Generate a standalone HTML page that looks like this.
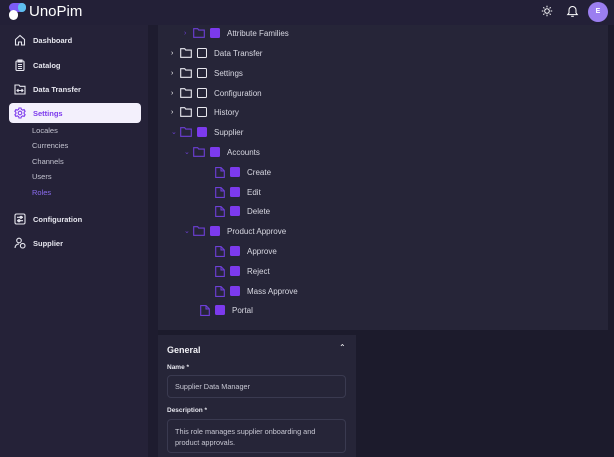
<!DOCTYPE html>
<html><head><meta charset="utf-8"><style>
*{box-sizing:border-box;margin:0;padding:0}
body{width:614px;height:457px;overflow:hidden;background:#1c1b2c;font-family:"Liberation Sans",sans-serif;position:relative}
.hdr{position:absolute;left:0;top:0;width:614px;height:25px;background:#232037}
.side{position:absolute;left:0;top:25px;width:148px;height:432px;background:#252238}
.strip{position:absolute;left:148px;top:25px;width:10px;height:432px;background:#1e1c2f}
.panel{position:absolute;left:158px;top:25px;width:450px;height:305px;background:#262538}
.nav{position:absolute;left:14px;font-size:7.5px;font-weight:bold;color:#e6e6ee;display:flex;align-items:center}
.nav svg{width:12px;height:12px;margin-right:7px}
.sub{position:absolute;left:32px;font-size:7.5px;color:#c4c4d0}
.row{position:absolute;height:12px;display:flex;align-items:center;font-size:8px;color:#d8d8e2}
.row svg{flex:none}
.cb{width:10px;height:10px;border-radius:1.5px;flex:none}
.on{background:#7c3aed}
.off{border:1.2px solid #e8e8ee}
.gen{position:absolute;left:158px;top:335px;width:198px;height:122px;background:#262538}
.lbl{position:absolute;left:9px;font-size:6.5px;font-weight:bold;color:#e6e6ee}
.inp{position:absolute;left:9px;width:179px;border:1px solid #3a3a50;border-radius:4px;font-size:7.3px;color:#c8c8d4;padding:0 7px}
</style></head><body>
<div class="hdr"></div>
<svg style="position:absolute;left:9px;top:3px" width="18" height="17" viewBox="0 0 18 17"><rect x="0" y="0" width="17" height="9" rx="4.5" fill="#7c5cf5"/><rect x="9" y="0" width="8" height="9" rx="4" fill="#5ec0f0"/><rect x="0" y="7" width="9" height="10" rx="4.5" fill="#fff"/></svg>
<div style="position:absolute;left:29px;top:3px;font-size:15px;color:#fff">UnoPim</div>
<svg style="position:absolute;left:541px;top:5px" width="12" height="12" viewBox="0 0 12 12" stroke="#fff" stroke-width="1" fill="none"><circle cx="6" cy="6" r="2.3"/><path d="M6 .8v1.6M6 9.6v1.6M.8 6h1.6M9.6 6h1.6M2.3 2.3l1.1 1.1M8.6 8.6l1.1 1.1M2.3 9.7l1.1-1.1M8.6 3.4l1.1-1.1"/></svg>
<svg style="position:absolute;left:566px;top:4px" width="13" height="14" viewBox="0 0 13 14" stroke="#fff" stroke-width="1" fill="none"><path d="M3 9V6a3.5 3.5 0 0 1 7 0v3l1.3 1.6H1.7z"/><path d="M5.2 12.3h2.6"/></svg>
<div style="position:absolute;left:588px;top:2px;width:20px;height:20px;border-radius:50%;background:#9b7ef0;color:#fff;font-size:7px;font-weight:bold;text-align:center;line-height:20px">E</div>
<div class="side"></div><div class="strip"></div>
<div class="nav" style="top:34px"><svg viewBox="0 0 12 12" fill="none" stroke="#e6e6ee" stroke-width="1.1"><path d="M1.5 5.5L6 1.5l4.5 4V11h-3V8h-3v3h-3z"/></svg>Dashboard</div>
<div class="nav" style="top:59px"><svg viewBox="0 0 12 12" fill="none" stroke="#e6e6ee" stroke-width="1.1"><rect x="2" y="2" width="8" height="9.5" rx="1"/><rect x="4" y="1" width="4" height="2"/><path d="M4 5.5h4M4 7.5h4M4 9.5h4"/></svg>Catalog</div>
<div class="nav" style="top:83px"><svg viewBox="0 0 12 12" fill="none" stroke="#e6e6ee" stroke-width="1.1"><path d="M1 2h4l1 1.3h5V11H1z"/><path d="M3 7.5h6M7.5 6l1.5 1.5L7.5 9M4.5 6 3 7.5 4.5 9"/></svg>Data Transfer</div>
<div style="position:absolute;left:9px;top:103px;width:132px;height:20px;background:#f3f0fc;border-radius:4px"></div>
<div class="nav" style="top:107px;color:#7c3aed"><svg viewBox="0 0 12 12" fill="none" stroke="#7c3aed" stroke-width="1.1"><circle cx="6" cy="6" r="1.8"/><path d="M5 1h2l.4 1.4 1.3.7 1.4-.5 1 1.7-1 1v1.4l1 1-1 1.7-1.4-.5-1.3.7L7 11H5l-.4-1.4-1.3-.7-1.4.5-1-1.7 1-1V5.3l-1-1 1-1.7 1.4.5 1.3-.7z"/></svg>Settings</div>
<div class="sub" style="top:126px">Locales</div>
<div class="sub" style="top:141px">Currencies</div>
<div class="sub" style="top:157px">Channels</div>
<div class="sub" style="top:172px">Users</div>
<div class="sub" style="top:188px;color:#8b6cf0">Roles</div>
<div class="nav" style="top:213px"><svg viewBox="0 0 12 12" fill="none" stroke="#e6e6ee" stroke-width="1.1"><rect x="1" y="1" width="10" height="10" rx="1.5"/><path d="M3 4.3h6M3 7.7h6"/><circle cx="7" cy="4.3" r="1"/><circle cx="5" cy="7.7" r="1"/></svg>Configuration</div>
<div class="nav" style="top:237px"><svg viewBox="0 0 12 12" fill="none" stroke="#e6e6ee" stroke-width="1.1"><circle cx="5" cy="3.5" r="2.3"/><path d="M1 11c0-2.5 1.8-4 4-4"/><circle cx="8.7" cy="8.7" r="2.3"/></svg>Supplier</div>
<div class="panel"></div>
<div id="tree"></div>
<div class="gen">
<div style="position:absolute;left:9px;top:10px;font-size:9px;font-weight:bold;color:#f0f0f5">General</div>
<div style="position:absolute;left:181px;top:8px;font-size:8px;color:#fff">&#8963;</div>
<div class="lbl" style="top:29px">Name *</div>
<div class="inp" style="top:40px;height:23px;line-height:21px">Supplier Data Manager</div>
<div class="lbl" style="top:72px">Description *</div>
<div class="inp" style="top:84px;height:34px;padding-top:6px;line-height:11px">This role manages supplier onboarding and product approvals.</div>
</div>
<script>
var rows=[[1,'f',1,'Attribute Families',33,'>'],[0,'f',0,'Data Transfer',53,'>'],[0,'f',0,'Settings',73,'>'],[0,'f',0,'Configuration',93,'>'],[0,'f',0,'History',112,'>'],[0,'f',1,'Supplier',132,'v'],[1,'f',1,'Accounts',152,'v'],[2,'d',1,'Create',172],[2,'d',1,'Edit',192],[2,'d',1,'Delete',211],[1,'f',1,'Product Approve',231,'v'],[2,'d',1,'Approve',251],[2,'d',1,'Reject',271],[2,'d',1,'Mass Approve',291],[1,'d',1,'Portal',310]];
var h='';rows.forEach(function(r){
var lv=r[0],on=r[2],c=on?'#6d3fd6':'#ececf2';
var x=[171,184,215][lv];if(r[1]=='d'&&lv==1)x=200;
var s='<div class="row" style="left:'+x+'px;top:'+(r[4]-6)+'px">';
if(r[1]=='f'){s+='<span style="width:9px;font-size:7px;color:'+(on?'#6d3fd6':'#fff')+'">'+(r[5]=='>'?'&#8250;':'&#8964;')+'</span>';
s+='<svg width="12" height="10" viewBox="0 0 12 10" style="margin-right:5px"><path d="M.7 .7h4l1 1.4h5.6v7.2H.7z" fill="none" stroke="'+c+'" stroke-width="1.1"/></svg>';}
else{s+='<svg width="10" height="11" viewBox="0 0 10 11" style="margin-right:5px"><path d="M.7 .6h5.3l3.3 3.3v6.5H.7z M6 .6v3.3h3.3" fill="none" stroke="#6d3fd6" stroke-width="1.1"/></svg>';}
s+='<span class="cb '+(on?'on':'off')+'"></span><span style="margin-left:7px">'+r[3]+'</span></div>';h+=s;});
document.getElementById('tree').innerHTML=h;
</script>
</body></html>
